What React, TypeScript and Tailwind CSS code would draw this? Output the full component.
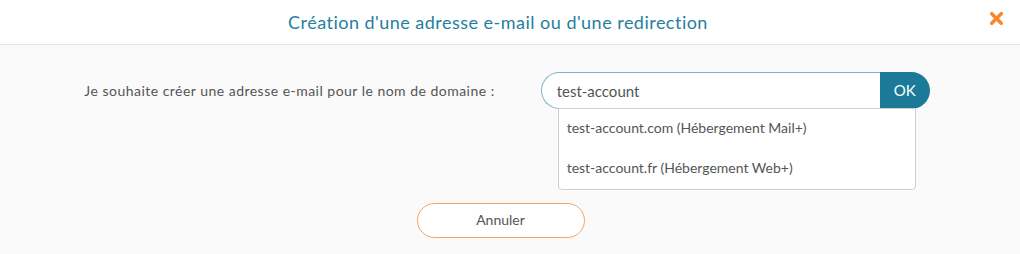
import { X } from "lucide-react";

const domains = [
  "test-account.com (Hébergement Mail+)",
  "test-account.fr (Hébergement Web+)",
];

export default function App() {
  return (
    <div
      className="w-[1020px] h-[254px] bg-[#fafafa] text-[#555]"
      style={{ fontFamily: "Lato, 'Noto Sans', sans-serif" }}
    >
      <header className="relative h-[45px] bg-white border-b border-[#e6e6e6] flex items-center justify-center">
        <h1 className="text-[18px] text-[#1f80a0] tracking-[0.48px] ml-[-24px]">
          Création d'une adresse e-mail ou d'une redirection
        </h1>
        <button className="absolute right-[14px] top-[9px] text-[#f7882f]">
          <X size={19} strokeWidth={4.5} />
        </button>
      </header>

      <main className="flex flex-col items-center pt-[27px]">
        <div className="flex items-start gap-[46px] ml-[-6px]">
          <label className="text-[14px] text-[#555] mt-[8px] tracking-[0.48px]">
            Je souhaite créer une adresse e-mail pour le nom de domaine :
          </label>
          <div className="relative">
            <div className="flex h-[37px] w-[389px]">
              <input
                className="flex-1 min-w-0 h-full bg-white border border-[#7fb3c4] border-r-0 rounded-l-[19px] pl-[15px] text-[15px] text-[#555] outline-none"
                defaultValue="test-account"
              />
              <button className="w-[50px] h-full bg-[#1a7a97] text-white text-[15px] rounded-r-[19px]">
                OK
              </button>
            </div>
            <ul className="absolute left-[17px] top-[36px] w-[358px] bg-white border border-[#cfcfcf] rounded-b-[4px]">
              {domains.map((d) => (
                <li key={d} className="h-[40px] flex items-center px-[8px] pb-[3px] text-[14px] text-[#555]">
                  {d}
                </li>
              ))}
            </ul>
          </div>
        </div>

        <button className="mt-[94px] w-[168px] h-[35px] pb-[3px] rounded-full border border-[#f7a463] bg-white text-[14px] text-[#555] ml-[-19px]">
          Annuler
        </button>
      </main>
    </div>
  );
}
